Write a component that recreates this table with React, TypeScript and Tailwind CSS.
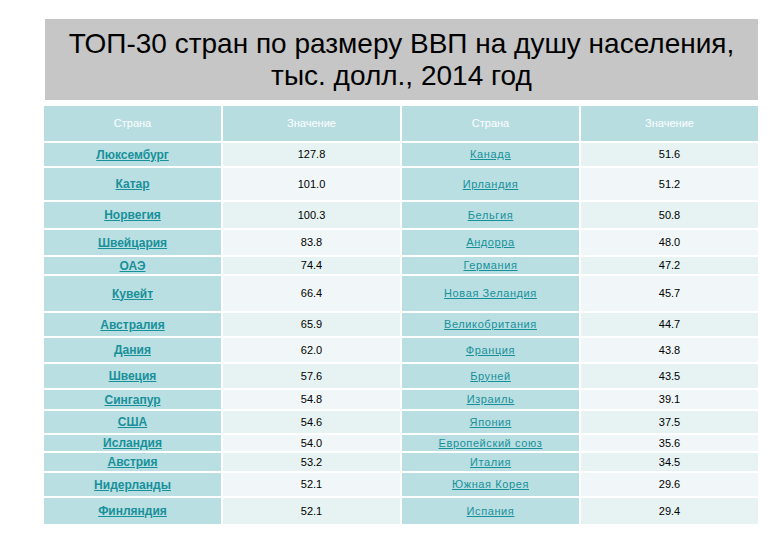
import React from "react";

type Row = { h: string; c1: string; v1: string; c2: string; v2: string };

const rows: Row[] = [
  { h: "h-[23px]", c1: "Люксембург", v1: "127.8", c2: "Канада", v2: "51.6" },
  { h: "h-[32px]", c1: "Катар", v1: "101.0", c2: "Ирландия", v2: "51.2" },
  { h: "h-[26px]", c1: "Норвегия", v1: "100.3", c2: "Бельгия", v2: "50.8" },
  { h: "h-[25px]", c1: "Швейцария", v1: "83.8", c2: "Андорра", v2: "48.0" },
  { h: "h-[17px]", c1: "ОАЭ", v1: "74.4", c2: "Германия", v2: "47.2" },
  { h: "h-[35px]", c1: "Кувейт", v1: "66.4", c2: "Новая Зеландия", v2: "45.7" },
  { h: "h-[23px]", c1: "Австралия", v1: "65.9", c2: "Великобритания", v2: "44.7" },
  { h: "h-[24px]", c1: "Дания", v1: "62.0", c2: "Франция", v2: "43.8" },
  { h: "h-[24px]", c1: "Швеция", v1: "57.6", c2: "Бруней", v2: "43.5" },
  { h: "h-[19px]", c1: "Сингапур", v1: "54.8", c2: "Израиль", v2: "39.1" },
  { h: "h-[22px]", c1: "США", v1: "54.6", c2: "Япония", v2: "37.5" },
  { h: "h-[16px]", c1: "Исландия", v1: "54.0", c2: "Европейский союз", v2: "35.6" },
  { h: "h-[18px]", c1: "Австрия", v1: "53.2", c2: "Италия", v2: "34.5" },
  { h: "h-[23px]", c1: "Нидерланды", v1: "52.1", c2: "Южная Корея", v2: "29.6" },
  { h: "h-[26px]", c1: "Финляндия", v1: "52.1", c2: "Испания", v2: "29.4" },
];

export default function App() {
  return (
    <div
      className="w-[780px] h-[540px] bg-white overflow-hidden"
      style={{ fontFamily: '"Liberation Sans", Arial, sans-serif' }}
    >
      <div className="ml-[45px] mt-[19px] w-[713px] h-[81px] bg-[#c6c6c6] flex items-center justify-center">
        <div className="text-center text-black text-[28px] leading-[32px] pt-[1px]">
          ТОП-30 стран по размеру ВВП на душу населения,
          <br />
          тыс. долл., 2014 год
        </div>
      </div>
      <div className="ml-[44px] mt-[6px] w-[714px] flex flex-col gap-[2px]">
        <div className="grid grid-cols-[177px_177px_177px_177px] gap-[2px] h-[35px]">
          {["Страна", "Значение", "Страна", "Значение"].map((t, i) => (
            <div
              key={i}
              className="bg-[#b7dde1] flex items-center justify-center text-white text-[11px]"
            >
              {t}
            </div>
          ))}
        </div>
        {rows.map((r, i) => {
          const vb = i % 2 === 0 ? "bg-[#e7f2f3]" : "bg-[#f1f6f8]";
          return (
            <div
              key={i}
              className={`grid grid-cols-[177px_177px_177px_177px] gap-[2px] ${r.h}`}
            >
              <div className="bg-[#b9dfe2] flex items-center justify-center">
                <span className="text-[#17909a] underline font-bold text-[12px] leading-none">
                  {r.c1}
                </span>
              </div>
              <div className={`${vb} flex items-center justify-center text-black text-[11px] leading-none`}>
                {r.v1}
              </div>
              <div className="bg-[#b9dfe2] flex items-center justify-center">
                <span className="text-[#17909a] underline text-[11px] tracking-[0.6px] leading-none">
                  {r.c2}
                </span>
              </div>
              <div className={`${vb} flex items-center justify-center text-black text-[11px] leading-none`}>
                {r.v2}
              </div>
            </div>
          );
        })}
      </div>
    </div>
  );
}
